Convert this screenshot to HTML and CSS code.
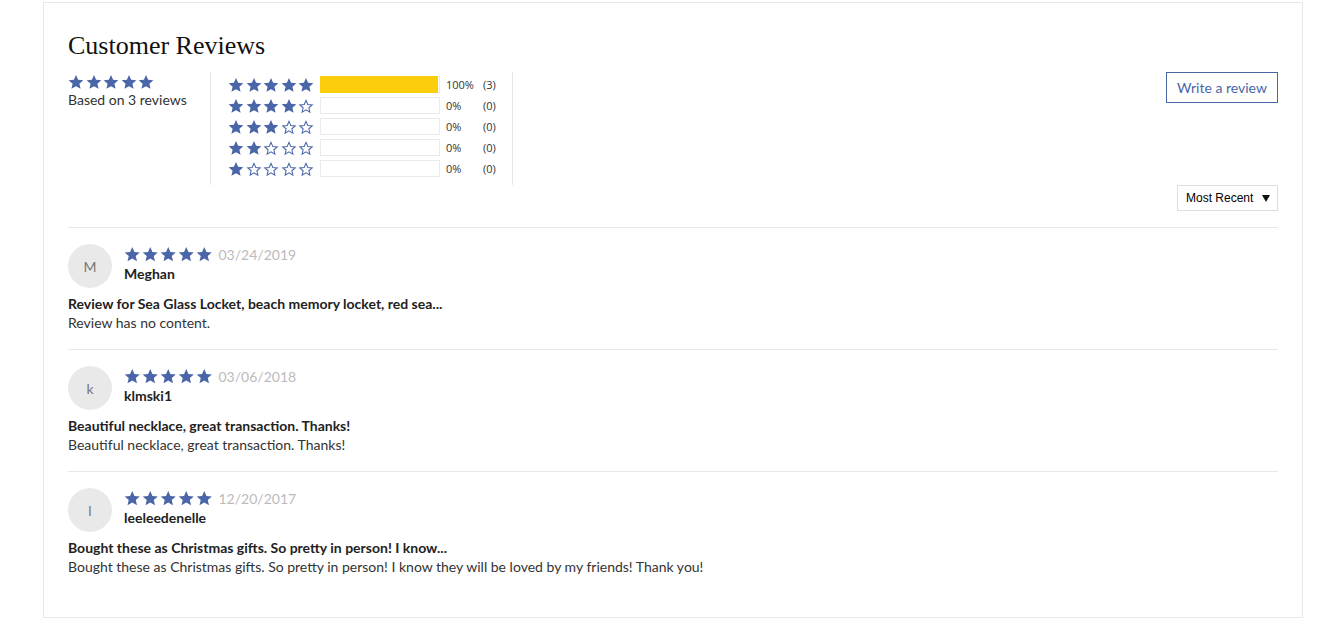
FILE: index.html
```html
<!DOCTYPE html>
<html>
<head>
<meta charset="utf-8">
<link rel="stylesheet" href="styles.css">
</head>
<body>
<svg width="0" height="0" class="defs">
  <defs>
    <symbol id="sf" viewBox="0 0 24 24"><path d="M12 1.5l3.2 7.2 7.8.7-5.9 5.2 1.8 7.7L12 18.2l-6.9 4.1 1.8-7.7L1 9.4l7.8-.7z" fill="#4a65a8"/></symbol>
    <symbol id="se" viewBox="0 0 24 24"><path d="M12 3.6l2.7 6.1 6.6.6-5 4.4 1.5 6.5L12 17.8l-5.8 3.4 1.5-6.5-5-4.4 6.6-.6z" fill="none" stroke="#4a65a8" stroke-width="1.6" stroke-linejoin="miter"/></symbol>
  </defs>
</svg>
<div class="reviews">
  <h2 class="title">Customer Reviews</h2>
  <div class="summary">
    <div class="overall">
      <div class="stars stars-lg">
        <svg><use href="#sf"/></svg><svg><use href="#sf"/></svg><svg><use href="#sf"/></svg><svg><use href="#sf"/></svg><svg><use href="#sf"/></svg>
      </div>
      <div class="based">Based on 3 reviews</div>
    </div>
    <div class="histogram">
      <div class="hrow">
        <div class="stars"><svg><use href="#sf"/></svg><svg><use href="#sf"/></svg><svg><use href="#sf"/></svg><svg><use href="#sf"/></svg><svg><use href="#sf"/></svg></div>
        <div class="bar"><div class="fill" style="width:100%"></div></div>
        <span class="pct">100%</span><span class="cnt">(3)</span>
      </div>
      <div class="hrow">
        <div class="stars"><svg><use href="#sf"/></svg><svg><use href="#sf"/></svg><svg><use href="#sf"/></svg><svg><use href="#sf"/></svg><svg><use href="#se"/></svg></div>
        <div class="bar"></div>
        <span class="pct">0%</span><span class="cnt">(0)</span>
      </div>
      <div class="hrow">
        <div class="stars"><svg><use href="#sf"/></svg><svg><use href="#sf"/></svg><svg><use href="#sf"/></svg><svg><use href="#se"/></svg><svg><use href="#se"/></svg></div>
        <div class="bar"></div>
        <span class="pct">0%</span><span class="cnt">(0)</span>
      </div>
      <div class="hrow">
        <div class="stars"><svg><use href="#sf"/></svg><svg><use href="#sf"/></svg><svg><use href="#se"/></svg><svg><use href="#se"/></svg><svg><use href="#se"/></svg></div>
        <div class="bar"></div>
        <span class="pct">0%</span><span class="cnt">(0)</span>
      </div>
      <div class="hrow">
        <div class="stars"><svg><use href="#sf"/></svg><svg><use href="#se"/></svg><svg><use href="#se"/></svg><svg><use href="#se"/></svg><svg><use href="#se"/></svg></div>
        <div class="bar"></div>
        <span class="pct">0%</span><span class="cnt">(0)</span>
      </div>
    </div>
    <div class="actions">
      <a class="write">Write a review</a>
      <div class="sort">Most Recent <span class="caret"></span></div>
    </div>
  </div>

  <div class="review">
    <div class="rhead">
      <div class="avatar">M</div>
      <div class="meta">
        <div class="mrow"><div class="stars"><svg><use href="#sf"/></svg><svg><use href="#sf"/></svg><svg><use href="#sf"/></svg><svg><use href="#sf"/></svg><svg><use href="#sf"/></svg></div><span class="date">03/24/2019</span></div>
        <div class="name">Meghan</div>
      </div>
    </div>
    <div class="rtitle">Review for Sea Glass Locket, beach memory locket, red sea...</div>
    <div class="rbody">Review has no content.</div>
  </div>

  <div class="review">
    <div class="rhead">
      <div class="avatar">k</div>
      <div class="meta">
        <div class="mrow"><div class="stars"><svg><use href="#sf"/></svg><svg><use href="#sf"/></svg><svg><use href="#sf"/></svg><svg><use href="#sf"/></svg><svg><use href="#sf"/></svg></div><span class="date">03/06/2018</span></div>
        <div class="name">klmski1</div>
      </div>
    </div>
    <div class="rtitle">Beautiful necklace, great transaction. Thanks!</div>
    <div class="rbody">Beautiful necklace, great transaction. Thanks!</div>
  </div>

  <div class="review">
    <div class="rhead">
      <div class="avatar">l</div>
      <div class="meta">
        <div class="mrow"><div class="stars"><svg><use href="#sf"/></svg><svg><use href="#sf"/></svg><svg><use href="#sf"/></svg><svg><use href="#sf"/></svg><svg><use href="#sf"/></svg></div><span class="date">12/20/2017</span></div>
        <div class="name">leeleedenelle</div>
      </div>
    </div>
    <div class="rtitle">Bought these as Christmas gifts. So pretty in person! I know...</div>
    <div class="rbody">Bought these as Christmas gifts. So pretty in person! I know they will be loved by my friends! Thank you!</div>
  </div>
</div>
</body>
</html>
```

FILE: styles.css
```css
* { box-sizing: border-box; }
body {
  margin: 0;
  font-family: Lato, "Liberation Sans", sans-serif;
  color: #333;
  background: #fff;
}
.defs { position: absolute; width: 0; height: 0; }
.reviews {
  margin: 2px 0 0 43px;
  width: 1260px;
  height: 616px;
  border: 1px solid #e8e8e8;
  padding: 28px 24px 0 24px;
}
.title {
  font-family: "Liberation Serif", serif;
  font-weight: normal;
  font-size: 26px;
  color: #111;
  margin: 0 0 12px 0;
  line-height: 30px;
}
.summary {
  display: flex;
  align-items: flex-start;
  border-bottom: 1px solid #e8e8e8;
  padding-bottom: 16px;
}
.overall { width: 142px; padding-top: 1px; }
.stars { display: flex; gap: 1.5px; }
.stars svg { width: 16px; height: 16px; display: block; }
.meta .stars svg { width: 16.5px; height: 16.5px; }
.based { font-size: 14px; line-height: 20px; margin-top: 0; }
.histogram {
  border-left: 1px solid #e8e8e8;
  border-right: 1px solid #e8e8e8;
  padding: 2px 16px 0 17px;
  height: 113px;
  margin-top: -1px;
}
.hrow {
  display: flex;
  align-items: center;
  height: 21px;
}
.hrow .stars { width: 92px; gap: 1.5px; }
.bar {
  width: 120px;
  height: 17px;
  border: 1px solid #eaeaea;
  margin-right: 6px;
}
.fill { background: #fbcd0a; margin: -1px; height: 17px; }
.pct { font-size: 11px; width: 37px; color: #333; font-family: "Open Sans", sans-serif; }
.cnt { font-size: 11px; color: #333; font-family: "Open Sans", sans-serif; }
.actions {
  flex: 1;
  display: flex;
  flex-direction: column;
  align-items: flex-end;
  margin-top: -1px;
}
.write {
  border: 1px solid #4a65a8;
  color: #4a65a8;
  font-size: 14px;
  height: 31px;
  width: 112px;
  display: flex;
  align-items: center;
  justify-content: center;
}
.sort {
  margin-top: 82px;
  border: 1px solid #ddd;
  height: 26px;
  width: 101px;
  font-family: "Liberation Sans", Arial, sans-serif;
  font-size: 12px;
  color: #000;
  display: flex;
  align-items: center;
  padding-left: 8px;
  gap: 9px;
}
.caret {
  width: 0; height: 0;
  border-left: 4px solid transparent;
  border-right: 4px solid transparent;
  border-top: 7px solid #111;
}
.review {
  border-bottom: 1px solid #e8e8e8;
  padding: 16px 0 16px 0;
}
.review:last-child { border-bottom: none; }
.rhead { display: flex; gap: 12px; align-items: flex-start; }
.avatar {
  width: 44px; height: 44px;
  border-radius: 50%;
  background: #e9e9e9;
  color: #777;
  font-size: 14px;
  display: flex; align-items: center; justify-content: center;
}
.meta { padding-top: 1px; }
.mrow { display: flex; align-items: center; gap: 6px; height: 18px; }
.date { color: #bbb; font-size: 14px; }
.name { font-weight: bold; font-size: 14px; line-height: 20px; color: #222; margin-top: 1px; }
.rtitle { font-weight: bold; font-size: 14px; line-height: 19px; margin-top: 6px; color: #222; }
.rbody { font-size: 14px; line-height: 20px; }
```
